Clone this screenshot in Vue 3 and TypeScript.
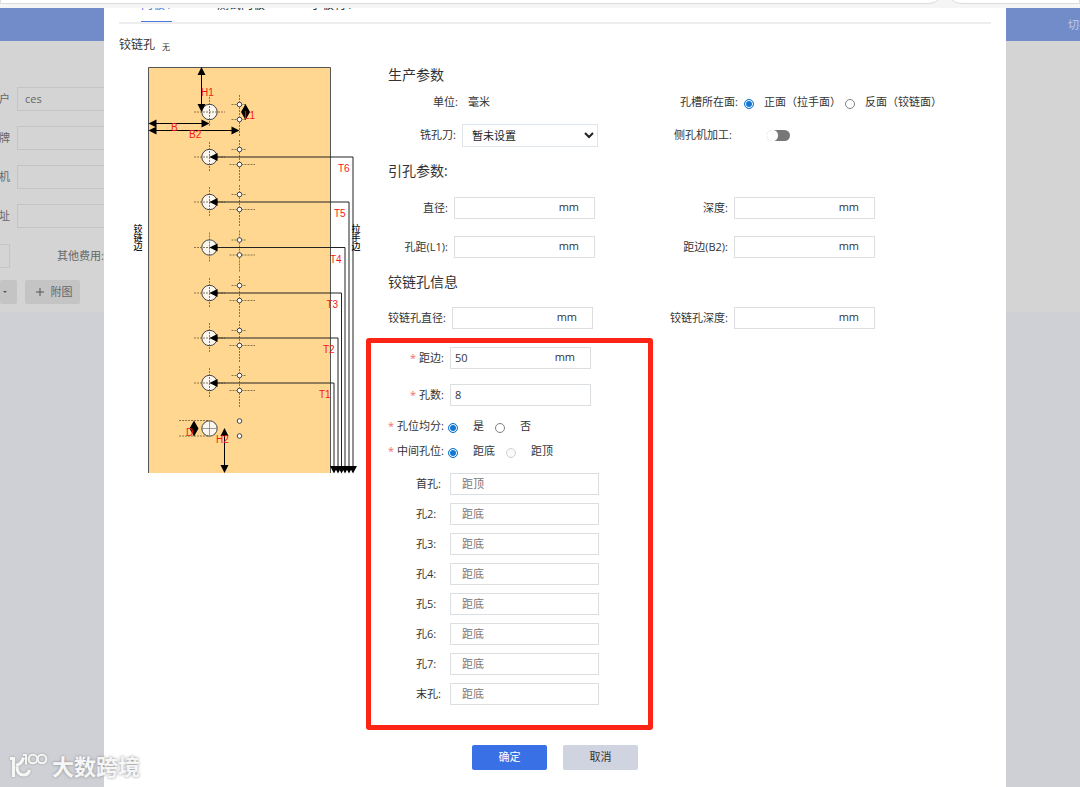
<script setup lang="ts">
import { ref } from 'vue'

interface TravelLine {
  name: string
  y: number
  x: number
}

const tabs = ['门板1', '测试门板', '小板材1']
const orderFields = ref([
  { label: '户', value: 'ces' },
  { label: '牌', value: '' },
  { label: '机', value: '' },
  { label: '址', value: '' },
])

const drill = ref('none')
const face = ref('front')
const sideDrill = ref(false)
const guideDiameter = ref('')
const guideDepth = ref('')
const guidePitch = ref('')
const guideEdge = ref('')
const hingeDiameter = ref('')
const hingeDepth = ref('')
const edge = ref('50')
const count = ref('8')
const even = ref('yes')
const middle = ref('bottom')

const holes = ref([
  { label: '首孔', hint: '距顶', value: '' },
  { label: '孔2', hint: '距底', value: '' },
  { label: '孔3', hint: '距底', value: '' },
  { label: '孔4', hint: '距底', value: '' },
  { label: '孔5', hint: '距底', value: '' },
  { label: '孔6', hint: '距底', value: '' },
  { label: '孔7', hint: '距底', value: '' },
  { label: '末孔', hint: '距底', value: '' },
])

const rows: number[] = [112, 157, 202, 247.5, 293, 338, 383]
const travel: TravelLine[] = [
  { name: 'T6', y: 157, x: 353 },
  { name: 'T5', y: 202, x: 349 },
  { name: 'T4', y: 247.5, x: 345 },
  { name: 'T3', y: 293, x: 341.5 },
  { name: 'T2', y: 338, x: 338 },
  { name: 'T1', y: 383, x: 334 },
]
</script>

<template>
  <div class="page">
    <div class="browser-strip">
      <div class="pill pill-main"></div>
      <div class="pill pill-side"></div>
    </div>

    <div class="workspace">
      <aside class="behind">
        <div class="behind-bar"></div>
        <div class="behind-panel">
          <label v-for="f in orderFields" :key="f.label" class="order-row">
            <span class="order-label">{{ f.label }}</span>
            <input v-model="f.value" class="order-input" type="text" />
          </label>
          <div class="fee-row">
            <span class="fee-box"></span>
            <span>其他费用:</span>
          </div>
          <div class="tool-row">
            <button type="button" class="tool tool-cut" aria-label="更多">
              <svg width="4" height="2" viewBox="0 0 4 2"><path d="M0 0h4L2 2z" fill="#555" /></svg>
            </button>
            <button type="button" class="tool tool-attach">
              <svg width="8" height="8" viewBox="0 0 8 8"><path d="M4 0v8M0 4h8" stroke="#555" fill="none" /></svg>
              附图
            </button>
          </div>
        </div>
      </aside>

      <main class="dialog">
        <nav class="tabs">
          <a v-for="(t, i) in tabs" :key="t" href="#" class="tab" :class="{ active: i === 0 }">{{ t }}</a>
        </nav>

        <h1 class="title">铰链孔 <small>无</small></h1>

        <div class="content">
          <svg class="diagram" width="230" height="420" viewBox="132 60 230 420" role="img" aria-label="铰链孔示意图">
            <rect x="148" y="67" width="183" height="406" fill="#ffd790" />
            <path d="M148.500 473V67.500H330.500V473" fill="none" stroke="#555" />

            <g v-for="(y, i) in rows" :key="y">
              <circle cx="209.500" :cy="y" r="7.700" fill="#fbf6ee" stroke="#444" />
              <path :d="`M194 ${y}h31M209.500 ${y - 15}v30`" class="dash" />
              <path :d="`M239.500 ${y - 17}v41M231.500 ${y - 7.500}h15`" class="dash" />
              <path :d="i === 0 ? `M231.500 ${y + 7.500}h15` : `M229.500 ${y + 7.500}h25.500`" class="dash" />
              <circle cx="239.500" :cy="y - 7.500" r="2.300" class="pilot" />
              <circle cx="239.500" :cy="y + 7.500" r="2.300" class="pilot" />
            </g>

            <circle cx="209.500" cy="428.500" r="7.700" fill="#fbf6ee" stroke="#444" />
            <path d="M202 428.500h15M209.500 421v15" stroke="#777" stroke-width=".7" />
            <path d="M179 420.500h30M179 436h30" class="dash" />
            <circle cx="239.500" cy="421" r="2.300" class="pilot" />
            <circle cx="239.500" cy="436" r="2.300" class="pilot" />

            <path d="M201.500 68v43M150 123.500h58M150 130.500h88M224.500 429v43" stroke="#000" fill="none" />
            <path
              d="M201.500 67l4 8h-8zM201.500 112l4 -8h-8zM148.500 123.500l8 -4v8zM209.500 123.500l-8 -4v8zM148.500 130.500l8 -4v8zM239.500 130.500l-8 -4v8zM224.500 428l4 8h-8zM224.500 473l4 -8h-8zM245.500 104l4.500 8l-4.500 8l-4.500 -8zM194 420.500l4.500 8l-4.500 8l-4.500 -8z"
            />

            <g v-for="t in travel" :key="t.name">
              <path :d="`M212 ${t.y}H${t.x}V470`" fill="none" stroke="#222" />
              <path :d="`M209.500 ${t.y}l8 -4v8zM${t.x} 473.500l4 -7.500h-8z`" />
              <text :x="t.x - 15" :y="t.y + 15" class="mark">{{ t.name }}</text>
            </g>
            <text x="201" y="96" class="mark">H1</text>
            <text x="244" y="119" class="mark">L1</text>
            <text x="171" y="131" class="mark">B</text>
            <text x="189" y="138" class="mark">B2</text>
            <text x="186" y="436" class="mark">D</text>
            <text x="216" y="443" class="mark">H2</text>

            <text x="138" y="224" class="side">铰链边</text>
            <text x="356" y="224" class="side">拉手边</text>
          </svg>

          <form class="form" @submit.prevent>
            <section class="group">
              <h2>生产参数</h2>
              <div class="pair params">
                <div class="item">
                  <span class="label w70">单位:</span><span class="value">毫米</span>
                </div>
                <div class="item" role="radiogroup" aria-label="孔槽所在面">
                  <span class="label w70">孔槽所在面:</span>
                  <span class="radios face">
                    <label><input v-model="face" type="radio" name="face" value="front" />正面（拉手面）</label>
                    <label><input v-model="face" type="radio" name="face" value="back" />反面（铰链面）</label>
                  </span>
                </div>
                <div class="item">
                  <label class="label w68" for="drill">铣孔刀:</label>
                  <select id="drill" v-model="drill" class="select">
                    <option value="none">暂未设置</option>
                  </select>
                </div>
                <div class="item">
                  <label class="label w64" for="side-drill">侧孔机加工:</label>
                  <input id="side-drill" v-model="sideDrill" class="switch" type="checkbox" />
                </div>
              </div>
            </section>

            <section class="group">
              <h2>引孔参数:</h2>
              <div class="pair spaced">
                <div class="item">
                  <label class="label w60" for="g-dia">直径:</label>
                  <span class="field"><input id="g-dia" v-model="guideDiameter" type="text" />mm</span>
                </div>
                <div class="item">
                  <label class="label w60" for="g-dep">深度:</label>
                  <span class="field"><input id="g-dep" v-model="guideDepth" type="text" />mm</span>
                </div>
                <div class="item">
                  <label class="label w60" for="g-pitch">孔距(L1):</label>
                  <span class="field"><input id="g-pitch" v-model="guidePitch" type="text" />mm</span>
                </div>
                <div class="item">
                  <label class="label w60" for="g-edge">距边(B2):</label>
                  <span class="field"><input id="g-edge" v-model="guideEdge" type="text" />mm</span>
                </div>
              </div>
            </section>

            <section class="group">
              <h2>铰链孔信息</h2>
              <div class="pair hinge">
                <div class="item">
                  <label class="label w58" for="h-dia">铰链孔直径:</label>
                  <span class="field"><input id="h-dia" v-model="hingeDiameter" type="text" />mm</span>
                </div>
                <div class="item">
                  <label class="label w58" for="h-dep">铰链孔深度:</label>
                  <span class="field"><input id="h-dep" v-model="hingeDepth" type="text" />mm</span>
                </div>
              </div>
            </section>

            <section class="highlight">
              <div class="required">
                <div class="item">
                  <label class="label w56" for="edge"><i>*</i>距边:</label>
                  <span class="field"><input id="edge" v-model="edge" type="text" />mm</span>
                </div>
                <div class="item">
                  <label class="label w56" for="count"><i>*</i>孔数:</label>
                  <span class="field"><input id="count" v-model="count" type="text" /></span>
                </div>
              </div>
              <div class="choices">
                <div class="item" role="radiogroup" aria-label="孔位均分">
                  <span class="label w54"><i>*</i>孔位均分:</span>
                  <span class="radios">
                    <label><input v-model="even" type="radio" name="even" value="yes" />是</label>
                    <label><input v-model="even" type="radio" name="even" value="no" />否</label>
                  </span>
                </div>
                <div class="item" role="radiogroup" aria-label="中间孔位">
                  <span class="label w54"><i>*</i>中间孔位:</span>
                  <span class="radios">
                    <label><input v-model="middle" type="radio" name="middle" value="bottom" />距底</label>
                    <label><input v-model="middle" type="radio" name="middle" value="top" disabled />距顶</label>
                  </span>
                </div>
              </div>
              <div class="holes">
                <label v-for="h in holes" :key="h.label" class="hole">
                  <span>{{ h.label }}:</span>
                  <input v-model="h.value" type="text" :placeholder="h.hint" />
                </label>
              </div>
            </section>
          </form>
        </div>

        <footer class="actions">
          <button type="button" class="btn primary">确定</button>
          <button type="button" class="btn">取消</button>
        </footer>
      </main>

      <aside class="behind">
        <div class="behind-bar">切换</div>
        <div class="behind-panel"></div>
      </aside>
    </div>

    <div class="watermark">
      <svg width="40" height="30" viewBox="0 0 40 30" aria-hidden="true">
        <g fill="none" stroke="#f6f6f6" stroke-width="3.200">
          <path d="M2 7.500h3.500V26" />
          <path d="M15.500 6.500C14.500 10.500 11.500 13.500 8 14.500" />
          <path d="M9 15.500c0 5.500 2.500 8.500 6.500 8.500c3 0 5.200 -1.800 6 -5" />
        </g>
        <g fill="none" stroke="#f6f6f6" stroke-width="2">
          <path d="M15 4h3v9.500" />
          <circle cx="25" cy="8" r="4.300" />
          <circle cx="34" cy="8" r="4.300" />
        </g>
      </svg>
      <span>大数跨境</span>
    </div>
  </div>
</template>

<style>
body {
  margin: 0;
  background: #cfd0d5;
}
</style>

<style scoped>
* {
  box-sizing: border-box;
}
.page {
  position: relative;
  display: flex;
  flex-direction: column;
  min-height: 100vh;
  overflow: hidden;
  font-family: "Open Sans", "Noto Sans CJK SC", sans-serif;
  font-size: 11px;
  line-height: 16px;
  color: #333;
}
input,
select,
button {
  font: inherit;
  color: inherit;
  margin: 0;
}
.browser-strip {
  display: flex;
  align-items: flex-end;
  gap: 4px;
  height: 8px;
  padding-bottom: 4px;
  overflow: hidden;
  background: #f5f5f6;
}
.pill {
  flex: none;
  height: 28px;
  border: 1px solid #dcdcde;
  background: #fff;
}
.pill-main {
  flex: 1;
  border-radius: 0 0 14px 0;
}
.pill-side {
  width: 133px;
  border-radius: 0 0 0 14px;
}
.workspace {
  flex: 1;
  display: grid;
  grid-template-columns: 104px minmax(0, 1fr) 74px;
}
.behind {
  overflow: hidden;
  background: #cfd0d5;
}
.behind-bar {
  height: 33px;
  padding-left: 62px;
  line-height: 33px;
  white-space: nowrap;
  color: #c3cde6;
  background: #728cc9;
}
.behind-panel {
  height: 271px;
  padding-top: 46px;
  background: #d4d4d4;
  color: #666;
}
.order-row {
  display: flex;
  align-items: center;
  gap: 7px;
  margin-bottom: 15px;
}
.order-label {
  display: flex;
  justify-content: flex-end;
  flex: none;
  width: 10px;
}
.order-input {
  flex: 1;
  min-width: 0;
  height: 24px;
  padding: 0 7px 2px;
  border: 1px solid #c4c4c4;
  border-right: 0;
  background: transparent;
  outline: 0;
}
.fee-row {
  display: flex;
  align-items: center;
  justify-content: space-between;
  padding-top: 1px;
}
.fee-box {
  width: 10px;
  height: 24px;
  border: 1px solid #c4c4c4;
  border-left: 0;
}
.tool-row {
  display: flex;
  gap: 8px;
  margin-top: 12px;
}
.tool {
  display: flex;
  align-items: center;
  justify-content: center;
  gap: 7px;
  height: 24px;
  padding: 0;
  border: 0;
  border-radius: 2px;
  background: #c4c4c4;
}
.tool-cut {
  width: 17px;
  padding-right: 8px;
}
.tool-attach {
  width: 55px;
  padding-left: 3px;
}
.dialog {
  padding-bottom: 17px;
  background: #fff;
}
.tabs {
  display: flex;
  align-items: flex-end;
  gap: 45px;
  height: 16px;
  margin: 0 15px;
  padding-left: 22px;
  overflow: hidden;
  border-bottom: 2px solid #eee;
  font-size: 12px;
}
.tab {
  padding-bottom: 8px;
  border-bottom: 1px solid transparent;
  color: #333;
  text-decoration: none;
  white-space: nowrap;
}
.tab.active {
  border-color: #4f7be0;
  color: #4f7be0;
}
.title {
  display: flex;
  align-items: center;
  gap: 7px;
  height: 20px;
  margin: 11px 15px 5px;
  font-size: 12px;
  line-height: 20px;
  font-weight: 400;
}
.title small {
  padding-top: 3px;
  font-size: 8px;
  line-height: 12px;
}
.content {
  display: flex;
  gap: 4px;
  padding-left: 28px;
}
.diagram {
  flex: none;
}
.dash {
  fill: none;
  stroke: #6b5a3a;
  stroke-width: 0.8;
  stroke-dasharray: 2 1;
}
.pilot {
  fill: #fff;
  stroke: #444;
}
.mark {
  font: 10px "Liberation Sans", sans-serif;
  fill: #f21818;
}
.side {
  font: 500 9px "Noto Sans CJK SC", sans-serif;
  writing-mode: vertical-rl;
  fill: #111;
}
.form {
  flex: 1;
  min-width: 0;
}
.group {
  padding-left: 22px;
  margin-bottom: 9px;
}
h2 {
  margin: 0;
  font-size: 14px;
  line-height: 30px;
  font-weight: 400;
}
.pair {
  display: grid;
  grid-template-columns: 280px 1fr;
  row-gap: 17px;
}
.pair.params {
  row-gap: 11px;
  padding-top: 1px;
}
.pair.spaced {
  padding-top: 11px;
}
.pair.hinge {
  grid-template-columns: 282px 1fr;
  padding-top: 10px;
}
.item {
  display: flex;
  align-items: center;
  min-height: 22px;
  white-space: nowrap;
}
.label {
  flex: none;
  margin-right: 6px;
  padding-bottom: 1px;
  text-align: right;
}
.label i {
  margin-right: 3px;
  font-style: normal;
  color: #f56c6c;
}
.w54 {
  width: 54px;
}
.w56 {
  width: 56px;
}
.w58 {
  width: 58px;
}
.w60 {
  width: 60px;
}
.w64 {
  width: 64px;
}
.w68 {
  width: 68px;
}
.w70 {
  width: 70px;
}
.value {
  margin-left: 4px;
}
.field {
  display: flex;
  align-items: center;
  width: 141px;
  height: 22px;
  padding: 0 15px 2px 0;
  border: 1px solid #dcdfe2;
}
.field input {
  flex: 1;
  min-width: 0;
  height: 18px;
  padding: 0 4px;
  border: 0;
  background: transparent;
  outline: 0;
}
.select {
  width: 136px;
  height: 23px;
  padding: 0 0 0 5px;
  border: 1px solid #dfe5ec;
  border-radius: 0;
  background: #fff;
  color: #222;
}
.radios {
  display: flex;
  gap: 11px;
}
.radios label {
  display: flex;
  align-items: center;
  gap: 15px;
}
.radios.face {
  gap: 4px;
}
.radios.face label {
  gap: 10px;
}
.radios input {
  appearance: none;
  width: 10px;
  height: 10px;
  margin-top: 3px;
  border: 1px solid #808080;
  border-radius: 50%;
  background: #fff;
}
.radios input:checked {
  border-color: #1478d2;
  background: #1478d2;
  box-shadow: inset 0 0 0 1px #fff;
}
.radios input:disabled {
  border-color: #d0d0d0;
  background: #fafafa;
}
.switch {
  appearance: none;
  display: flex;
  width: 23px;
  height: 11px;
  margin-left: 29px;
  border-radius: 6px;
  background: linear-gradient(90deg, #fff 6px, #777 9px);
}
.switch::before {
  content: "";
  width: 11px;
  height: 11px;
  border-radius: 50%;
  background: #fff;
  box-shadow: 0 0 1px #bbb;
}
.switch:checked {
  justify-content: flex-end;
  background: #3a70e6;
}
.highlight {
  width: 287px;
  padding: 4px 0 20px 17px;
  border: 5px solid #fb2415;
  border-radius: 3px;
}
.required {
  display: grid;
  row-gap: 15px;
}
.choices {
  display: grid;
  row-gap: 3px;
  margin: 9px 0 11px;
}
.holes {
  display: grid;
  row-gap: 8px;
}
.hole {
  display: flex;
  align-items: center;
  padding-left: 28px;
}
.hole span {
  width: 34px;
}
.hole input {
  width: 149px;
  height: 22px;
  padding: 0 11px 2px;
  border: 1px solid #dcdfe2;
  outline: 0;
}
.hole input::placeholder {
  color: #777;
}
.actions {
  display: flex;
  justify-content: center;
  gap: 16px;
  margin-top: 15px;
}
.btn {
  width: 75px;
  height: 25px;
  padding: 0 0 2px;
  border: 0;
  border-radius: 2px;
  background: #d0d4e0;
}
.btn.primary {
  background: #3a70e6;
  color: #fff;
}
.watermark {
  position: absolute;
  left: 8px;
  bottom: 6px;
  display: flex;
  align-items: center;
  gap: 4px;
  font-size: 22px;
  line-height: 30px;
  font-weight: 700;
  color: #f6f6f6;
  text-shadow: 0 0 3px #888;
}
.watermark svg {
  filter: drop-shadow(0 0 1px #999);
}
</style>
